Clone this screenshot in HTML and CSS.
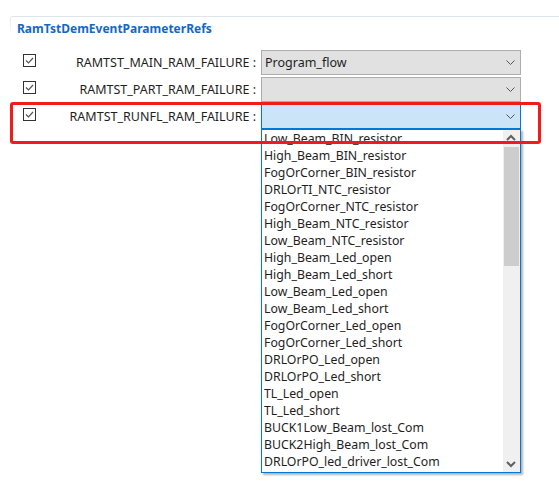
FILE: index.html
```html
<!doctype html>
<html>
  <head>
    <meta charset="utf-8" />
    <title>RamTstDemEventParameterRefs</title>
    <link rel="stylesheet" href="styles.css">
  </head>
  <body>
    <div class="panel">
      <div class="panel-title">RamTstDemEventParameterRefs</div>
      <div class="rows">
        <span class="check"><svg width="13" height="13" viewBox="0 0 13 13"><rect x="0.5" y="0.5" width="12" height="12" fill="#fff" stroke="#333"/><polyline points="3,6.5 5.5,9 10,4" fill="none" stroke="#555" stroke-width="1.2"/></svg></span>
        <span class="label">RAMTST_MAIN_RAM_FAILURE :</span>
        <div class="combo"><span class="value">Program_flow</span><svg class="arrow" width="9" height="5" viewBox="0 0 9 5"><polyline points="0.5,0.5 4.5,4.5 8.5,0.5" fill="none" stroke="#555" stroke-width="1"/></svg></div>

        <span class="check"><svg width="13" height="13" viewBox="0 0 13 13"><rect x="0.5" y="0.5" width="12" height="12" fill="#fff" stroke="#333"/><polyline points="3,6.5 5.5,9 10,4" fill="none" stroke="#555" stroke-width="1.2"/></svg></span>
        <span class="label">RAMTST_PART_RAM_FAILURE :</span>
        <div class="combo"><span class="value"></span><svg class="arrow" width="9" height="5" viewBox="0 0 9 5"><polyline points="0.5,0.5 4.5,4.5 8.5,0.5" fill="none" stroke="#555" stroke-width="1"/></svg></div>

        <span class="check"><svg width="13" height="13" viewBox="0 0 13 13"><rect x="0.5" y="0.5" width="12" height="12" fill="#fff" stroke="#333"/><polyline points="3,6.5 5.5,9 10,4" fill="none" stroke="#555" stroke-width="1.2"/></svg></span>
        <span class="label">RAMTST_RUNFL_RAM_FAILURE :</span>
        <div class="combo open"><span class="value"></span><svg class="arrow" width="9" height="5" viewBox="0 0 9 5"><polyline points="0.5,0.5 4.5,4.5 8.5,0.5" fill="none" stroke="#555" stroke-width="1"/></svg>
          <div class="dropdown">
            <ul class="options">
              <li>Low_Beam_BIN_resistor</li>
              <li>High_Beam_BIN_resistor</li>
              <li>FogOrCorner_BIN_resistor</li>
              <li>DRLOrTI_NTC_resistor</li>
              <li>FogOrCorner_NTC_resistor</li>
              <li>High_Beam_NTC_resistor</li>
              <li>Low_Beam_NTC_resistor</li>
              <li>High_Beam_Led_open</li>
              <li>High_Beam_Led_short</li>
              <li>Low_Beam_Led_open</li>
              <li>Low_Beam_Led_short</li>
              <li>FogOrCorner_Led_open</li>
              <li>FogOrCorner_Led_short</li>
              <li>DRLOrPO_Led_open</li>
              <li>DRLOrPO_Led_short</li>
              <li>TL_Led_open</li>
              <li>TL_Led_short</li>
              <li>BUCK1Low_Beam_lost_Com</li>
              <li>BUCK2High_Beam_lost_Com</li>
              <li>DRLOrPO_led_driver_lost_Com</li>
            </ul>
            <div class="scrollbar">
              <svg class="sb-arrow" width="16" height="17" viewBox="0 0 16 17"><polyline points="4,10 8,6 12,10" fill="none" stroke="#606060" stroke-width="2"/></svg>
              <div class="sb-thumb"></div>
              <div class="sb-track"></div>
              <svg class="sb-arrow" width="16" height="17" viewBox="0 0 16 17"><polyline points="4,7 8,11 12,7" fill="none" stroke="#606060" stroke-width="2"/></svg>
            </div>
          </div>
        </div>
      </div>
    </div>
    <div class="highlight"></div>
  </body>
</html>
```

FILE: styles.css
```css
* { box-sizing: border-box; }
body { margin: 0; background: #fff; color: #1e1e1e; font-family: "Noto Sans", "Liberation Sans", sans-serif; font-size: 12px; position: relative; height: 504px; overflow: hidden; }
.panel {
  margin: 16px 0 0 10px;
  border-top: 1px solid #dfe4ea;
  border-top-left-radius: 3px;
  background: linear-gradient(#e3e7ec, #fff) no-repeat 0 0 / 1px 18px;
  height: 480px;
}
.panel-title { color: #1468c4; font-weight: bold; font-size: 12px; padding: 3px 0 0 7px; height: 33px; }
.rows {
  display: grid;
  grid-template-columns: 13px 225px 260px;
  grid-auto-rows: 25px;
  row-gap: 2px;
  margin-left: 13px;
}
.check { display: block; margin-top: 4px; height: 13px; }
.check svg { display: block; }
.label { text-align: right; padding-right: 5px; line-height: 25px; font-size: 12.5px; white-space: nowrap; }
.combo {
  position: relative;
  display: flex;
  align-items: center;
  background: #e1e1e1;
  border: 1px solid #adadad;
  padding: 0 0 0 3px;
}
.combo .value { flex: 1; font-size: 12.5px; }
.combo .arrow { margin-right: 5px; }
.combo.open { background: #cce4f7; border-color: #0078d7; }
.dropdown {
  position: absolute;
  left: -1px;
  top: 24px;
  width: 260px;
  height: 344px;
  background: #fff;
  border: 1px solid #0078d7;
  box-shadow: 2px 2px 2px rgba(0, 0, 0, 0.3);
  display: flex;
  z-index: 2;
}
.options { list-style: none; margin: 0; padding: 0; flex: 1; }
.options li { height: 17px; line-height: 17px; padding-left: 2px; font-size: 12.3px; white-space: nowrap; }
.scrollbar { width: 17px; background: #f0f0f0; display: flex; flex-direction: column; }
.sb-arrow { display: block; flex: none; }
.sb-thumb { height: 119px; margin: 0 1px; background: #cdcdcd; }
.sb-track { flex: 1; }
.highlight {
  position: absolute;
  left: 10px;
  top: 102px;
  width: 531px;
  height: 42px;
  border: 3px solid #f01c1c;
  border-radius: 3px;
  z-index: 3;
}
```
